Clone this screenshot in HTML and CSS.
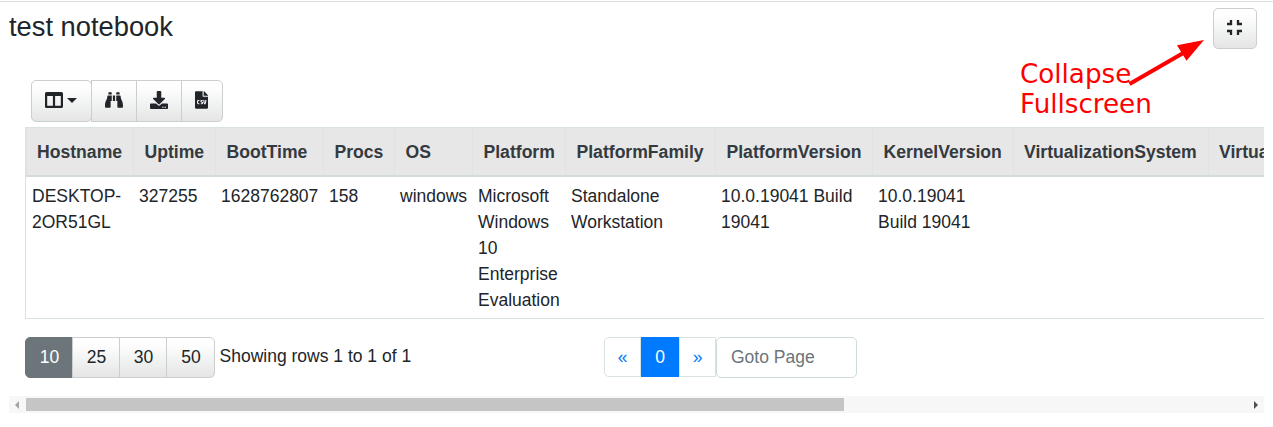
FILE: index.html
```html
<!DOCTYPE html>
<html lang="en">
<head>
<meta charset="utf-8">
<title>test notebook</title>
<link rel="stylesheet" href="styles.css">
</head>
<body>
<main class="page">
  <header class="header">
    <h1 class="title">test notebook</h1>
    <button class="btn collapse" aria-label="Collapse">
      <svg width="15" height="15" viewBox="0 0 15 15"><path d="M4 0v4H0M11 0v4h4M0 11h4v4M15 11h-4v4" fill="none" stroke="currentColor" stroke-width="2.300"/></svg>
    </button>
  </header>
  <div class="toolbar">
    <button class="btn columns" aria-label="Columns">
      <svg width="18" height="16" viewBox="0 0 18 16"><path fill="currentColor" fill-rule="evenodd" d="M1.500 0h15Q18 0 18 1.500v13q0 1.500-1.500 1.500h-15Q0 16 0 14.500v-13Q0 0 1.500 0zM2.200 4v9.800h5.700V4zm7.900 0v9.800h5.700V4z"/></svg>
      <span class="caret"></span>
    </button>
    <button class="btn search" aria-label="Search">
      <svg width="18" height="16" viewBox="0 0 512 456"><path fill="currentColor" transform="translate(0 -28)" d="M416 48c0-8.840-7.160-16-16-16h-64c-8.840 0-16 7.160-16 16v48h96V48zM63.910 159.990C61.400 253.840 3.460 274.220 0 404v44c0 17.670 14.330 32 32 32h96c17.670 0 32-14.330 32-32V288h32V128H95.840c-17.630 0-31.450 14.370-31.930 31.990zM448.090 159.990C447.610 142.370 433.790 128 416.160 128H320v160h32v160c0 17.670 14.330 32 32 32h96c17.670 0 32-14.330 32-32v-44c-3.460-129.780-61.400-150.160-63.910-244.010zM176 32h-64c-8.840 0-16 7.160-16 16v48h96V48c0-8.840-7.160-16-16-16zM224 288h64V128h-64v160z"/></svg>
    </button>
    <button class="btn download" aria-label="Download">
      <svg width="18" height="18" viewBox="0 0 512 512"><path fill="currentColor" d="M216 0h80c13.300 0 24 10.700 24 24v168h87.700c17.800 0 26.700 21.500 14.100 34.100L269.700 378.300c-7.500 7.500-19.800 7.500-27.300 0L90.100 226.100c-12.600-12.600-3.700-34.100 14.100-34.100H192V24c0-13.300 10.700-24 24-24zm296 376v112c0 13.300-10.700 24-24 24H24c-13.300 0-24-10.700-24-24V376c0-13.300 10.700-24 24-24h146.700l49 49c20.100 20.100 52.500 20.100 72.600 0l49-49H488c13.300 0 24 10.700 24 24zm-124 88c0-11-9-20-20-20s-20 9-20 20 9 20 20 20 20-9 20-20zm64 0c0-11-9-20-20-20s-20 9-20 20 9 20 20 20 20-9 20-20z"/></svg>
    </button>
    <button class="btn csv" aria-label="Export CSV">
      <svg width="13" height="18" viewBox="0 0 384 512"><path fill="currentColor" d="M224 136V0H24C10.700 0 0 10.700 0 24v464c0 13.300 10.700 24 24 24h336c13.300 0 24-10.700 24-24V160H248c-13.200 0-24-10.800-24-24zM384 121.900v6.100H256V0h6.100c6.400 0 12.500 2.500 17 7l97.900 98c4.500 4.500 7 10.600 7 16.900z"/><path fill="none" stroke="#fff" stroke-width="32" d="M128 270H98q-22 0-22 24v46q0 25 22 25h30M224 270h-28q-22 0-22 22 0 16 22 22 28 6 28 25 0 26-24 26h-28M262 256v36q0 44 28 76 28-32 28-76v-36"/></svg>
    </button>
  </div>
  <div class="table-wrap">
  <table class="grid">
    <colgroup><col class="c-host"><col class="c-up"><col class="c-boot"><col class="c-procs"><col class="c-os"><col class="c-plat"><col class="c-fam"><col class="c-pver"><col class="c-kver"><col class="c-vsys"><col class="c-vrole"></colgroup>
    <thead><tr><th>Hostname</th><th>Uptime</th><th>BootTime</th><th>Procs</th><th>OS</th><th>Platform</th><th>PlatformFamily</th><th>PlatformVersion</th><th>KernelVersion</th><th>VirtualizationSystem</th><th>Virtua</th></tr></thead>
    <tbody><tr><td>DESKTOP-<br>2OR51GL</td><td>327255</td><td>1628762807</td><td>158</td><td>windows</td><td>Microsoft<br>Windows<br>10<br>Enterprise<br>Evaluation</td><td>Standalone<br>Workstation</td><td>10.0.19041 Build<br>19041</td><td>10.0.19041<br>Build 19041</td><td></td><td></td></tr></tbody>
  </table>
  </div>
  <div class="footer">
    <div class="sizes"><button class="btn active">10</button><button class="btn">25</button><button class="btn">30</button><button class="btn">50</button></div>
    <span class="summary">Showing rows 1 to 1 of 1</span>
    <nav class="pager"><a class="prev">«</a><a class="current">0</a><a class="next">»</a></nav>
    <input class="goto" placeholder="Goto Page">
  </div>
  <div class="scroll">
    <svg class="arrow-left" width="4" height="8" viewBox="0 0 4 8"><path fill="#a3a3a3" d="M4 0v8L0 4z"/></svg>
    <div class="track"><div class="thumb"></div></div>
    <svg class="arrow-right" width="4" height="8" viewBox="0 0 4 8"><path fill="#505050" d="M0 0v8l4-4z"/></svg>
  </div>
  <div class="note">Collapse<br>Fullscreen</div>
  <svg class="pointer" width="80" height="50" viewBox="0 0 80 50"><path d="M5.500 46 61 14" stroke="red" stroke-width="4"/><path d="M80 2 53 7.200 62.500 22.800z" fill="red"/></svg>
</main>
</body>
</html>
```
FILE: styles.css
```css
* { box-sizing: border-box; }
body { margin: 0; background: #fff; color: #212529; font: 17.5px/26px "Liberation Sans", Arial, sans-serif; overflow: hidden; }
.page { position: relative; width: 1273px; height: 427px; padding: 1px 9px 0; overflow: hidden; }
.page::before { content: ""; display: block; height: 1px; margin: 0 -9px; background: #dbe1e0; }
.header { display: flex; justify-content: space-between; height: 78px; padding: 6px 7px 0 0; }
.title { margin: 3px 0 0; font-size: 27.3px; line-height: 32px; font-weight: 400; }
.btn { display: flex; align-items: center; justify-content: center; margin: 0; padding: 0; border: 1px solid #cbcecd; background: linear-gradient(#fff 0%, #fdfdfd 20%, #f3f5f4 50%, #e4e5e4 100%); color: #212529; font: inherit; }
.btn svg { display: block; }
.collapse { width: 44px; height: 41px; border-radius: 5px; }
.collapse svg { margin: -2px 1px 0 0; }
.toolbar { display: flex; height: 42px; margin-left: 22px; }
.toolbar .btn { height: 42px; margin-right: -1px; }
.toolbar .btn svg { margin-top: -2px; }
.toolbar .columns { width: 61px; border-radius: 5px; gap: 4px; padding-right: 1px; }
.caret { border: 5.500px solid transparent; border-top-color: #212529; border-bottom: 0; margin-top: -2px; }
.search, .download { width: 46px; }
.toolbar .csv { width: 42px; border-radius: 0 5px 5px 0; padding-right: 2px; }
.table-wrap { width: 1239px; margin: 5px 0 0 16px; overflow: hidden; }
.grid { table-layout: fixed; width: 1359px; border-collapse: separate; border-spacing: 0; border: 1px solid #dae3e2; }
.c-host { width: 107px; } .c-up { width: 82px; } .c-boot { width: 108px; } .c-procs { width: 71px; } .c-os { width: 78px; }
.c-plat { width: 93px; } .c-fam { width: 150px; } .c-pver { width: 157px; } .c-kver { width: 140.500px; } .c-vsys { width: 195px; } .c-vrole { width: 175.500px; }
.grid th { height: 49px; padding: 0 0 0 11px; border-bottom: 2px solid #d4dcdb; background: #e7e7e7; color: #343a40; font-size: 17.600px; text-align: left; white-space: nowrap; box-shadow: inset 1px 0 #dde4e3; }
.grid th + th { padding-left: 11.500px; }
.grid td { height: 141px; padding: 6px 0 0 6px; vertical-align: top; white-space: nowrap; }
.footer { display: flex; height: 41px; margin: 18px 0 0 16px; }
.sizes { display: flex; width: 190px; }
.sizes .btn { width: 48px; height: 41px; margin-right: -1px; padding: 0 0 2px 1px; }
.sizes .btn:last-child { width: 49px; margin-right: 0; border-radius: 0 5px 5px 0; }
.sizes .active { background: #6c757a; border-color: #6c757a; color: #fff; border-radius: 5px 0 0 5px; }
.summary { width: 389px; padding: 6px 0 0 4.500px; }
.pager { display: flex; height: 40px; color: #007bff; line-height: 38px; text-align: center; }
.pager a { border: 1px solid #dae3e2; }
.prev { width: 37px; border-radius: 5px 0 0 5px; }
.pager .current { width: 38px; background: #007bff; border-color: #007bff; color: #fff; }
.next { width: 37px; }
.goto { width: 141px; height: 41px; margin: 0; padding: 0 14px; border: 1px solid #cedadb; border-radius: 5px; font: inherit; }
.goto::placeholder { color: #6c757a; opacity: 1; }
.scroll { display: flex; align-items: center; width: 1255px; height: 17px; margin-top: 18px; padding: 0 6px; background: #f7f7f7; }
.track { width: 1229px; height: 13px; margin: 0 1px 0 7px; }
.thumb { width: 818px; height: 13px; background: #c5c5c5; }
.note { position: absolute; left: 1020px; top: 59px; color: red; font: 26.200px/30px "DejaVu Sans", sans-serif; }
.pointer { position: absolute; left: 1124px; top: 38px; }
```
